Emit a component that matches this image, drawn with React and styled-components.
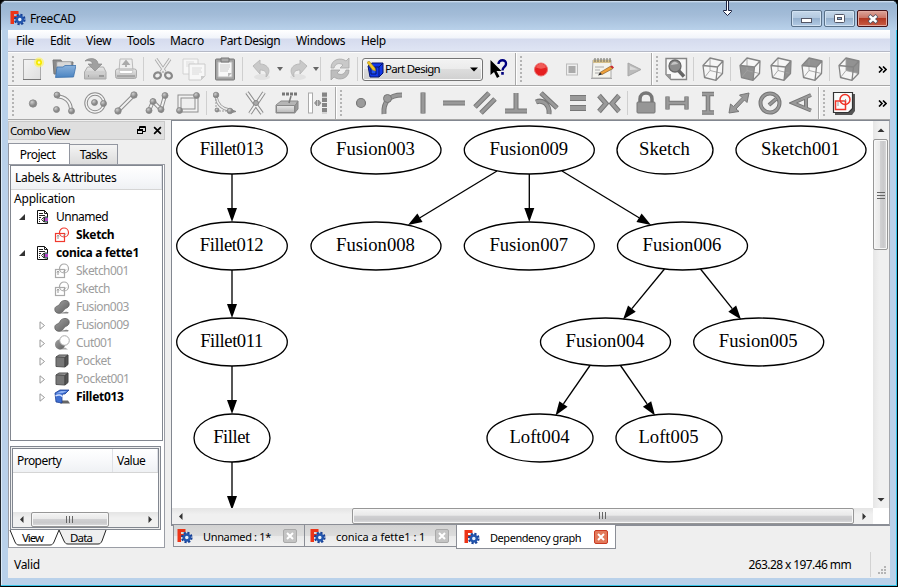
import React from "react";
import styled, { createGlobalStyle, css } from "styled-components";

const GlobalStyle = createGlobalStyle`
  * { box-sizing: border-box; }
  body { margin: 0; background: #000; font-family: "Noto Sans", "Open Sans", sans-serif; font-size: 12px; color: #000; overflow: hidden; }
  svg { display: block; flex: none; }
`;

const uiFont = css`font-family: "Noto Sans", "Open Sans", sans-serif;`;

const Window = styled.div`
  position: relative; width: 898px; height: 587px; display: flex; flex-direction: column;
  background: #b9d1ea; border: 1px solid #20262c; border-right-color: #000; border-bottom-color: #000;
  border-radius: 6px 6px 0 0; box-shadow: inset -1px -1px 0 #35c4e8, inset 1px 1px 0 #dcebf8;
  padding: 0 7px 8px 7px; overflow: hidden; ${uiFont}
`;
const TitleBar = styled.div`
  flex: none; height: 29px; margin: 0 -7px; padding: 0 9px 0 9px; display: flex; align-items: flex-start;
  background: linear-gradient(#d9e7f5 0, #98b4d1 2px, #a3bcd8 14px, #b9d1ea 29px);
  border-radius: 5px 5px 0 0;
`;
const TitleIcon = styled.div`padding-top: 9px; width: 20px;`;
const Text = styled.span`
  white-space: pre; letter-spacing: ${(p) => p.$ls || 0}px; font-weight: ${(p) => (p.$bold ? 700 : 400)};
  color: ${(p) => p.$color || "#000"}; line-height: 18px; font-size: ${(p) => p.$size || 12}px;
`;
const TitleText = styled(Text)`padding-top: 9px; flex: 1;`;
const CaptionButtons = styled.div`display: flex; gap: 2px; padding-top: 9px;`;
const CaptionButton = styled.div`
  width: 31px; height: 17px; border: 1px solid ${(p) => (p.$close ? "#451218" : "#5a7189")}; border-radius: 2px;
  display: flex; align-items: center; justify-content: center;
  box-shadow: inset 0 0 0 1px ${(p) => (p.$close ? "#e3aaa0" : "#d2e2f2")};
  background: ${(p) => (p.$close
    ? "linear-gradient(#dca59b 0, #cb7263 48%, #b23823 50%, #c95c44 100%)"
    : "linear-gradient(#c6d8ea 0, #b2c8df 48%, #96b1ce 50%, #b3cbe4 100%)")};
`;
const MenuBar = styled.div`
  flex: none; height: 22px; display: flex; align-items: center; padding: 1px 0 0 8px;
  background: linear-gradient(#fff 0, #f1f4fa 8px, #d5dbee 9px, #dfe5f4 21px); border-bottom: 1px solid #b5b9c6;
`;
const MenuItem = styled.div`width: ${(p) => p.$w}px;`;
const ToolRow = styled.div`
  flex: none; height: 34px; display: flex; background: #efefef; border-top: 1px solid #fdfdfd; border-bottom: 1px solid #a7a7a7;
`;
const ToolBar = styled.div`
  display: flex; align-items: center; height: 32px; width: ${(p) => p.$w}px;
  border-right: ${(p) => (p.$last ? 0 : 1)}px solid #a9a9a9; box-shadow: ${(p) => (p.$last ? "none" : "1px 0 0 #fff")};
`;
const Grip = styled.div`
  flex: none; width: 2px; height: 27px; margin: 0 ${(p) => p.$after}px 0 4px;
  background: repeating-linear-gradient(#b4b4b4 0 2px, transparent 2px 4px);
`;
const Slot = styled.div`flex: none; width: ${(p) => p.$w || 31}px; display: flex; justify-content: center; align-items: center;`;
const Separator = styled.div`flex: none; width: 1px; height: 24px; margin: 0 ${(p) => p.$r ?? 3}px 0 ${(p) => p.$l ?? 2}px; background: #cfcfcf;`;
const Overflow = styled.div`margin-left: auto; padding-right: 3px;`;
const Combo = styled.div`
  flex: none; width: 121px; height: 23px; border: 1px solid #747474; border-radius: 3px; display: flex; align-items: center;
  padding: 0 4px; box-shadow: inset 0 0 0 1px #fafafa;
  background: linear-gradient(#f3f3f3 0, #ebebeb 49%, #dddddd 50%, #d0d0d0 100%);
`;
const ComboText = styled(Text)`margin-left: 1px; flex: 1;`;
const Body = styled.div`flex: none; height: 430px; display: flex; background: #efefef;`;
const Dock = styled.div`width: 157px; padding-top: 1px; display: flex; flex-direction: column;`;
const DockTitle = styled.div`
  height: 19px; border: 1px solid #c9c9c9; background: #dfdfdf; display: flex; align-items: center; gap: 7px; padding: 0 2px 0 1px;
`;
const DockName = styled(Text)`flex: 1;`;
const DockTabs = styled.div`height: 24px; display: flex; align-items: flex-end; padding-top: 3px;`;
const DockTab = styled.div`
  width: ${(p) => p.$w}px; height: ${(p) => (p.$active ? 22 : 20)}px; display: flex; align-items: center; justify-content: center;
  border: 1px solid #9296a0; border-bottom: 0; border-left-width: ${(p) => (p.$active ? 1 : 0)}px; margin-bottom: ${(p) => (p.$active ? -1 : 0)}px;
  background: ${(p) => (p.$active ? "#fff" : "linear-gradient(#f4f4f4, #dcdcdc)")}; padding-right: ${(p) => (p.$active ? 3 : 0)}px;
`;
const DockPage = styled.div`
  width: 157px; height: 384px; background: #fff; border: 1px solid #9a9da5; padding: 0 0 0 1px; display: flex; flex-direction: column;
`;
const Tree = styled.div`width: 153px; height: 277px; border: 1px solid #828790; background: #fff;`;
const HeaderRow = styled.div`
  height: ${(p) => p.$h}px; display: flex; background: linear-gradient(#fff, #f8f9fb 50%, #eff1f4); border-bottom: 1px solid #d5d5d5;
`;
const HeaderCell = styled.div`
  width: ${(p) => p.$w}px; padding-left: 4px; display: flex; align-items: center; border-right: 1px solid #dfe1e6;
`;
const TreeRow = styled.div`height: 18px; display: flex; align-items: center; padding-left: ${(p) => p.$pad}px;`;
const Expander = styled.div`width: ${(p) => p.$w}px; display: flex; justify-content: flex-start;`;
const IconCell = styled.div`width: ${(p) => p.$w}px;`;
const PropertyFrame = styled.div`width: 151px; height: 84px; margin-top: 5px; border: 1px solid #828790; background: #efefef; padding: 1px;`;
const PropertyTable = styled.div`height: 80px; border: 1px solid #828790; background: #fff; display: flex; flex-direction: column; justify-content: space-between;`;
const SheetTabs = styled.div`
  width: 152px; height: 17px;
  svg { overflow: visible; }
`;
const HBar = styled.div`
  height: ${(p) => p.$h}px; width: ${(p) => p.$w}px; display: flex; align-items: center; background: linear-gradient(#e4e4e4, #f0f0f0 40%);
`;
const ArrowCell = styled.div`
  width: ${(p) => p.$w}px; height: ${(p) => p.$h || 16}px; flex: none; display: flex; align-items: center; justify-content: center;
  margin-top: ${(p) => (p.$end ? "auto" : 0)};
`;
const ThumbH = styled.div`
  width: ${(p) => p.$w}px; height: 100%; margin-left: ${(p) => p.$x}px; margin-right: auto; border: 1px solid #979797; border-radius: 2px;
  display: flex; align-items: center; justify-content: center; box-shadow: inset 0 0 0 1px #f7f7f7;
  background: linear-gradient(#f4f4f4 0, #e9e9e9 45%, #d0d0d2 50%, #c9c9cb 75%, #dddddf 100%);
`;
const VBar = styled.div`width: 16px; height: 387px; display: flex; flex-direction: column; background: linear-gradient(90deg, #e6e6e6, #f0f0f0 40%);`;
const ThumbV = styled.div`
  flex: none; width: 15px; height: 111px; border: 1px solid #979797; border-radius: 2px; display: flex; align-items: center; justify-content: center;
  box-shadow: inset 0 0 0 1px #f7f7f7; background: linear-gradient(90deg, #f4f4f4 0, #e9e9e9 45%, #d0d0d2 50%, #c9c9cb 75%, #dddddf 100%);
`;
const Mdi = styled.div`width: 719px; margin-left: 6px; display: flex; flex-direction: column;`;
const MdiView = styled.div`
  height: 406px; border: 1px solid #828790; border-bottom: 2px solid #8b8e96; border-right-color: #a4a7ad; background: #fff;
`;
const ViewRow = styled.div`height: 387px; display: flex;`;
const MdiTabs = styled.div`display: flex; align-items: flex-start; padding-left: 2px;`;
const MdiTab = styled.div`
  width: ${(p) => p.$w}px; height: ${(p) => (p.$active ? 24 : 22)}px; margin-top: -1px;
  display: flex; align-items: center; border: 1px solid #8b8e96; border-top: 0; padding: 1px 7px 0 ${(p) => p.$pl}px;
  margin-right: -1px; z-index: ${(p) => (p.$active ? 1 : 0)};
  background: ${(p) => (p.$active ? "#fff" : "linear-gradient(#d2d2d2 0, #dcdcdc 50%, #eaeaea 55%, #f1f1f1)")};
`;
const TabText = styled(Text)`margin-left: ${(p) => p.$x}px; padding-top: 1px; flex: 1;`;
const CloseBox = styled.div`
  width: 14px; height: 14px; border-radius: 2px; border: 1px solid ${(p) => (p.$active ? "#c93a22" : "#a9a9a9")};
  background: ${(p) => (p.$active ? "#e2795a" : "#c4c4c4")}; display: flex; align-items: center; justify-content: center;
`;
const StatusBar = styled.div`
  flex: none; height: 28px; background: #efefef; display: flex; align-items: center; padding: 2px 3px 0 6px;
`;
const StatusText = styled(Text)`flex: 1;`;
const StatusDivider = styled.div`width: 1px; height: 25px; margin: -2px 6px 0 19px; background: #d2d2d2;`;
const ResizeCursor = styled.div`position: absolute; left: 721px; top: -1px;`;
const Defs = styled.svg`position: absolute; width: 0; height: 0;`;

const Ic = ({ children, s = 24, w, h, vb = "0 0 24 24" }) => (
  <svg width={w || s} height={h || s} viewBox={vb} fill="none">{children}</svg>
);

const dot = (x, y, r = 3) => <circle key={`${x},${y}`} cx={x} cy={y} r={r} fill="url(#ball)" stroke="#858585" strokeWidth=".8" />;
const tube = (d) => (
  <>
    <path d={d} stroke="#8e8e8e" strokeWidth="4" />
    <path d={d} stroke="#f2f2f2" strokeWidth="2" />
  </>
);
const slab = (d, w = 4) => (
  <>
    <path d={d} stroke="#777" strokeWidth={w + 1} />
    <path d={d} stroke="#999" strokeWidth={w - 1} />
  </>
);
const cubeLines = (
  <>
    <path d="M9 1v12.500l12.500 3M9 13.500l-5.500 7" stroke="#a0a0a0" strokeWidth=".9" />
    <path d="M2 8.500L9 1l13 3-5.500 6zM2 8.500l1.500 12L15 23.300l1.500-13.300M15 23.300l6.500-6.800L22 4" stroke="#858585" strokeWidth="1.300" strokeLinejoin="round" />
  </>
);
const faces = {
  none: "",
  front: "M2 8.500l14.500 1.500L15 23.300 3.500 20.500z",
  right: "M16.500 10L22 4l-.5 12.500-6.500 6.800z",
  top: "M2 8.500L9 1l13 3-5.500 6z",
  back: "M9 1l13 3-.5 12.500L9 13.500z",
};
const Cube = ({ face }) => (
  <Ic><path d="M2 8.500L9 1l13 3-.5 12.500-6.500 6.800-11.500-2.800z" fill="#f6f6f6" /><path d={faces[face]} fill="#929292" />{cubeLines}</Ic>
);
const SketchArt = ({ c }) => (
  <>
    <rect x="1.500" y="6.500" width="9" height="8" stroke={c} strokeWidth="1.200" />
    <circle cx="10" cy="5.500" r="4.500" stroke={c} strokeWidth="1.200" />
    <path d="M4 12V8.500M3 9.500l1-1.500 1 1.500M9 9.500l3-3" stroke="#999" />
  </>
);

const icons = {
  newDoc: <Ic><rect x="2.500" y="2.500" width="17" height="20" fill="url(#paper)" stroke="#ababab" /><path d="M2 22.500h18" stroke="#777" /><circle cx="18" cy="5.500" r="5" fill="#fff35a" opacity=".65" /><circle cx="18" cy="5.500" r="3" fill="#f5e900" /><circle cx="18" cy="5.500" r="1.200" fill="#fffbc0" /></Ic>,
  open: <Ic><path d="M1 3h8l1 2h11l-1 12H2z" fill="#8b8b8b" stroke="#777" /><path d="M5 5h14v7H5z" fill="#f5f5f5" stroke="#aaa" /><path d="M6 7h12M6 9h12" stroke="#bbb" /><path d="M5 10h6l2-1.500h11L21.500 20l-18 .5z" fill="url(#blue)" stroke="#3d72ac" strokeWidth=".8" /></Ic>,
  save: <Ic><path d="M1.500 15l3-5h16l2.500 5v7h-21.500z" fill="url(#metal)" stroke="#aaa" /><path d="M2 15h20.500" stroke="#c9c9c9" /><path d="M16 19h5M5 19h1" stroke="#999" strokeWidth="2" /><path d="M2 4C6 0 15 1 15 7h4l-7 7-7-7h4.500C9.500 4 6 3 2 4z" fill="#a0a0a0" stroke="#8b8b8b" strokeWidth=".7" /></Ic>,
  print: <Ic><path d="M6 2h12l1 12H5z" fill="#eee" stroke="#bbb" /><path d="M12 10V7H9.500L12 4l2.500 3H12" fill="#aaa" stroke="#aaa" strokeWidth="1.800" /><rect x="1.500" y="12" width="21" height="9.500" rx="2" fill="url(#metal)" stroke="#acacac" /><path d="M5 13.500h14l-1 3H6z" fill="#fff" stroke="#bbb" strokeWidth=".7" /><path d="M3 19h18" stroke="#888" /></Ic>,
  cut: <Ic><path d="M5 2l9 13M19 2l-9 13" stroke="#aaa" strokeWidth="3.200" /><path d="M5 2l9 13M19 2l-9 13" stroke="#ededed" strokeWidth="1.500" /><ellipse cx="6.500" cy="18.500" rx="3.500" ry="3" stroke="#898989" strokeWidth="2.200" transform="rotate(-25 6.500 18.500)" /><ellipse cx="17.500" cy="18.500" rx="3.500" ry="3" stroke="#898989" strokeWidth="2.200" transform="rotate(25 17.500 18.500)" /></Ic>,
  copy: <Ic><path d="M1 2h15v15H1z" fill="#f7f7f7" stroke="#d2d2d2" /><path d="M4 5h8M4 7h9M4 9h4" stroke="#ddd" /><path d="M7 7h16v12l-4 4H7z" fill="#f7f7f7" stroke="#cbcbcb" /><path d="M10 11h10M10 13h9M10 15h10M10 17h7" stroke="#dadada" /><path d="M19 23v-4h4z" fill="#ccc" /></Ic>,
  paste: <Ic><rect x="2.500" y="2" width="19" height="21" rx="1" fill="#a1a1a1" stroke="#777" /><path d="M5 5h14v15H5z" fill="#f8f8f8" stroke="#bbb" /><path d="M7 8h10M7 10h10M7 12h9M7 14h8" stroke="#ccc" /><path d="M8 1h8v4H8z" fill="#aaa" stroke="#777" /><path d="M15 20v-4h4z" fill="#bbb" /></Ic>,
  undo: <Ic><ellipse cx="12" cy="20" rx="8" ry="3" fill="#e2e2e2" /><path d="M3 9l7-6v4c8 0 12 7 6 13 1-5-1-7-6-7v4z" fill="#c9c9c9" stroke="#b9b9b9" /></Ic>,
  redo: <Ic><ellipse cx="12" cy="20" rx="8" ry="3" fill="#e2e2e2" /><path d="M21 9l-7-6v4c-8 0-12 7-6 13-1-5 1-7 6-7v4z" fill="#c9c9c9" stroke="#b9b9b9" /></Ic>,
  refresh: <Ic><path d="M3 11C3 2 13 0 18 4l3-3v10h-9l3-3c-4-3-8-1-9 3z" fill="#c9c9c9" stroke="#a9a9a9" strokeWidth=".8" /><path d="M21 13c0 9-10 11-15 7l-3 3V13h9l-3 3c4 3 8 1 9-3z" fill="#bdbdbd" stroke="#a3a3a3" strokeWidth=".8" /></Ic>,
  help: <Ic><path d="M4.500 3v15l3.500-3 3 6 2.500-1.500-3-5.500h5z" fill="#000" /><path d="M12.500 7c0-5 8-5 7.500 0 0 3-3.500 3-3.500 6.500" stroke="#00007e" strokeWidth="2.400" /><path d="M15.200 15h2.600v2.800h-2.600z" fill="#00007e" /></Ic>,
  record: <Ic><circle cx="12" cy="12.500" r="6.500" fill="#e51f20" stroke="#ec7070" /><path d="M7 10.500c1-5 9-5 10 0-3 1.500-7 1.500-10 0z" fill="#f46a65" opacity=".8" /></Ic>,
  stop: <Ic><rect x="6.500" y="7" width="11" height="11" fill="#eee" stroke="#bcbcbc" /><rect x="8.500" y="9" width="7" height="7" fill="#aaa" /></Ic>,
  macro: <Ic><path d="M2 3h18v18H1z" fill="#f3f3ed" stroke="#aaa" /><path d="M2 3h18v3H2z" fill="#d6c08c" /><path d="M4 1v4M7 1v4M10 1v4M13 1v4M16 1v4M19 1v4" stroke="#6d6d60" /><path d="M4 10h9M4 13h5M4 16h9M0 21.500h21" stroke="#aaa" /><path d="M9 15.500l10-6 3 2-11 6z" fill="#f0a13a" stroke="#8a622d" strokeWidth=".7" /><path d="M19 9.500l2-1 2 2-1 1z" fill="#cc2630" /><path d="M9 15.500l2 2-4 1z" fill="#222" /></Ic>,
  play: <Ic><path d="M6 6v13l13-6.500z" fill="#bbb" stroke="#a8a8a8" /><path d="M8 9v4l8-.5z" fill="#dadada" /></Ic>,
  fit: <Ic><path d="M2 1.500h20.500v21H7l-5-5z" fill="#f8f8f8" stroke="#868686" strokeWidth="1.400" /><path d="M2 17l5 5v-5z" fill="#999" /><circle cx="11" cy="9" r="6" fill="#8c8c8c" stroke="#666" strokeWidth="1.300" /><path d="M7 8c2-5 6-3 7-1z" fill="#c5c5c5" /><path d="M14.500 13.500l5.500 6" stroke="#666" strokeWidth="3.500" /></Ic>,
  point: <Ic>{dot(12, 12.500, 3.700)}</Ic>,
  arc: <Ic>{tube("M5 5.500c8 0 14 5 14 14")}{[dot(5, 4), dot(19.500, 20), dot(4.500, 18.500)]}</Ic>,
  circle: <Ic><circle cx="12" cy="12" r="9" stroke="#8e8e8e" strokeWidth="3.500" /><circle cx="12" cy="12" r="9" stroke="#f2f2f2" strokeWidth="1.500" />{[dot(11.500, 11.500), dot(20.500, 12.500)]}</Ic>,
  line: <Ic>{tube("M4 20L20 4")}{[dot(4, 20, 3.200), dot(20, 4, 3.200)]}</Ic>,
  poly: <Ic>{tube("M4 19.500l4-9 8 8 4-14")}{[dot(4, 19.500), dot(8, 10.500), dot(16, 18.500), dot(20, 4.500)]}</Ic>,
  rect: <Ic>{tube("M3.500 5.500h17v14h-17z")}{[dot(3.500, 19.500), dot(20.500, 4.500)]}</Ic>,
  fillet: <Ic><path d="M3 5c1 8 6 13 14 14" stroke="#9b9b9b" strokeWidth="3" /><path d="M3 5c1 8 6 13 14 14" stroke="#eee" strokeWidth="1.500" /><path d="M3 5v15h15" stroke="#999" strokeDasharray="2 1" />{[dot(3, 4, 2.800), dot(17, 20, 2.800), dot(4, 19, 2)]}<path d="M19 19l4 1.500-4 1z" stroke="#888" fill="#888" /></Ic>,
  trim: <Ic>{tube("M3 1.500l15 21M20 1.500L6 22.500")}<circle cx="12" cy="12" r="2.500" fill="#aaa" stroke="#888" /></Ic>,
  external: <Ic><path d="M1 14l5-4h17l-3 5v7H1z" fill="#b5b5b5" stroke="#8d8d8d" /><path d="M1.500 14.500h18v7h-18z" fill="url(#metal)" stroke="#888" /><path d="M20 14.500l3-4v7.500l-3 3.500z" fill="#9a9a9a" stroke="#888" /><path d="M7 3h15" stroke="#777" strokeWidth="3" strokeDasharray="3 1" /><path d="M16 5l-2 7" stroke="#777" strokeWidth="1.500" /></Ic>,
  carbon: <Ic><rect x="2.500" y="2" width="4" height="20" fill="#fff" stroke="#aaa" /><path d="M11 9l-2.500 3 2.500 3zM12.500 9l2.500 3-2.500 3z" fill="#999" stroke="#888" strokeWidth=".8" /><path d="M18.500 1.500v21" stroke="#858585" strokeWidth="5" strokeDasharray="4.200 1" /></Ic>,
  cPoint: <Ic><circle cx="12" cy="12" r="4.500" fill="#9b9b9b" stroke="#777" strokeWidth="1.200" /></Ic>,
  cTangent: <Ic>{slab("M4 23C3 11 9 4 22 4")}<circle cx="7.500" cy="7.500" r="4" fill="#9b9b9b" stroke="#777" /></Ic>,
  cVert: <Ic>{slab("M12 1.500v21")}</Ic>,
  cHor: <Ic>{slab("M1 12h22")}</Ic>,
  cPar: <Ic>{slab("M2 16L16 2M8 22L22 8")}</Ic>,
  cPerp: <Ic>{slab("M12 2v17M1 20h22")}</Ic>,
  cTan2: <Ic>{slab("M6 2l16 15M1 11c7-3 14 3 13 12")}</Ic>,
  cEq: <Ic>{slab("M4 7h16M4 17h16", 5)}</Ic>,
  cSym: <Ic>{slab("M2 4.500l7 8-7 8M22 4.500l-7 8 7 8")}</Ic>,
  lock: <Ic><path d="M6 12V8c0-8 12-8 12 0v4" stroke="#777" strokeWidth="3.500" /><rect x="3" y="11" width="18" height="11" rx="1" fill="#969696" stroke="#777" /></Ic>,
  hDist: <Ic>{slab("M2.500 5.500v13M21.500 5.500v13M2 12h20", 3.4)}</Ic>,
  vDist: <Ic>{slab("M6 3h12M6 21.500h12M12 3v18", 3.6)}</Ic>,
  dist: <Ic><path d="M2 22l1.500-9 3 2.500L15 6.500 12.500 4 22 2l-2 9.500-2.500-2.500-8.500 9 3 2.500z" fill="#999" stroke="#777" /></Ic>,
  radius: <Ic><circle cx="12" cy="12" r="9.500" stroke="#777" strokeWidth="4" /><circle cx="12" cy="12" r="9.500" stroke="#999" strokeWidth="2" />{slab("M11 14l7-6", 3)}</Ic>,
  angle: <Ic>{slab("M22 4L4 12l18 7.500M17 6.500v11", 3)}</Ic>,
  sketch: <Ic><path d="M3 3h20v17l-3 4H3z" fill="#555" /><path d="M1.500 1.500h19v16l-4 4h-15z" fill="#fbfbfb" stroke="#333" strokeWidth="1.200" /><rect x="3.500" y="10" width="10" height="8.500" stroke="#ef3327" strokeWidth="1.500" /><circle cx="13" cy="8.500" r="5" stroke="#ef3327" strokeWidth="1.500" /><path d="M6 15v-4M11 11l3-3" stroke="#999" /></Ic>,
};

const Logo = ({ s = 16 }) => (
  <Ic s={s} vb="0 0 16 16">
    <path d="M.5 1h8v3H4v2h4v3H4v5H.5z" fill="#ec3417" />
    <circle cx="9.800" cy="9.500" r="4.600" stroke="#173f95" strokeWidth="2.400" strokeDasharray="2.100 1.510" />
    <circle cx="9.800" cy="9.500" r="3" fill="#e9f0fa" stroke="#2356ad" strokeWidth="2.500" />
  </Ic>
);
const Tri = ({ dir, c = "#333" }) => {
  const d = { l: "M5.500 1L2 4.500 5.500 8z", r: "M2.500 1L6 4.500 2.500 8z", u: "M.5 6L4 2.500 7.500 6z", d: "M.5 3L4 6.500 7.500 3z" }[dir];
  return <Ic w={8} h={9} vb="0 0 8 9"><path d={d} fill={c} /></Ic>;
};
const DropArrow = () => <Ic w={6} h={4} vb="0 0 6 4"><path d="M0 0h6L3 4z" fill="#666" /></Ic>;
const GripLines = ({ v }) => (
  <Ic w={8} h={8} vb="0 0 8 8"><path d={v ? "M0 1.500h8M0 4.500h8M0 7.500h8" : "M.5 0v7M3.500 0v7M6.500 0v7"} stroke="#666" /></Ic>
);
const Chevrons = () => <Ic w={9} h={7} vb="0 0 9 7"><path d="M1 .5l3 3-3 3M5 .5l3 3-3 3" stroke="#000" strokeWidth="1.600" /></Ic>;
const Cross = ({ s = 8, c = "#fff", w = 2 }) => <Ic s={s} vb="0 0 8 8"><path d="M1 1l6 6M7 1L1 7" stroke={c} strokeWidth={w} /></Ic>;

const treeIcons = {
  doc: <Ic s={16} vb="0 0 16 16"><path d="M2.500 1.500h7l3 3v10h-10z" fill="#fff" stroke="#111" /><path d="M9.500 1.500v3h3M4 4.500h4M4 6.500h6M4 8.500h2M4 10.500h1M4 12.500h1" stroke="#222" /><path d="M12.500 8H9.500v5h3" fill="#70c9cf" stroke="#333" /><path d="M10 9h3v3h-3z" fill="#b645c9" /><path d="M6.500 10.500L9 8v5z" fill="#fff" stroke="#333" /></Ic>,
  sketchRed: <Ic s={16} vb="0 0 16 16"><SketchArt c="#f0392e" /></Ic>,
  sketch: <Ic s={16} vb="0 0 16 16"><SketchArt c="#aaa" /></Ic>,
  fusion: <Ic s={16} vb="0 0 16 16"><path d="M3 14.500h11c2-1-1-2-3-1.500z" fill="#888" /><path d="M.8 10.500c0-4 3-2.500 5-5.500C7 .5 15.200 0 15.200 5c0 4.500-4 3.500-5.500 6.500-2.500 4-8.900 3.500-8.900-1z" fill="url(#dark)" stroke="#606060" strokeWidth=".8" /></Ic>,
  cut: <Ic s={16} vb="0 0 16 16"><path d="M4 14.500h10l-3-2z" fill="#aaa" /><circle cx="6" cy="9.500" r="5" fill="url(#dark)" /><circle cx="10.500" cy="5.500" r="4.800" fill="#fff" stroke="#aaa" /></Ic>,
  box: <Ic s={16} vb="0 0 16 16"><path d="M2 4l3-2h9l-3 2.500z" fill="#999" stroke="#555" /><path d="M2 4l9 .5V14l-9-.5z" fill="#777" stroke="#555" /><path d="M11 4.500L14 2v9.500L11 14z" fill="#555" stroke="#444" /></Ic>,
  fillet: <Ic s={16} vb="0 0 16 16"><path d="M6 14.500h10l-2-3H7z" fill="#666" /><path d="M1 4l5-3h9l-4 4H9c-1 1-1 2-1 9l-6-1z" fill="#3f6fd2" stroke="#1c3f93" strokeWidth=".8" /><path d="M2 4.500l5-2.500h6L9 4z" fill="#8eb1f1" /><path d="M1.500 7c3-2 6-1 7 1" stroke="#d3e1ff" strokeWidth="1.500" /></Ic>,
};

const rows = [
  ["sketch", "Sketch001"], ["sketch", "Sketch"], ["fusion", "Fusion003"], ["fusion", "Fusion009", 1],
  ["cut", "Cut001", 1], ["box", "Pocket", 1], ["box", "Pocket001", 1], ["fillet", "Fillet013", 1, true],
];
const OpenTri = () => <Ic w={7} h={7} vb="0 0 7 7"><path d="M6 0v6H0z" fill="#333" /></Ic>;
const ClosedTri = () => <Ic w={7} h={9} vb="0 0 7 9"><path d="M1 .8l4.500 3.700L1 8.200z" fill="#fff" stroke="#999" /></Ic>;

const nodes = [
  [232, 150, 55.3, "Fillet013"], [376, 150, 65, "Fusion003"], [529.3, 150, 65, "Fusion009"], [665, 150, 48, "Sketch"], [801, 150, 65, "Sketch001"],
  [232, 246, 55.3, "Fillet012"], [376, 246, 65, "Fusion008"], [529.3, 246, 65, "Fusion007"], [682.5, 246, 65, "Fusion006"],
  [232, 342, 55.3, "Fillet011"], [605.5, 342, 65, "Fusion004"], [758.7, 342, 65, "Fusion005"],
  [232, 438, 38, "Fillet"], [540, 438, 53, "Loft004"], [669, 438, 53, "Loft005"],
];
const edges = [
  [232, 174, 232, 222], [232, 270, 232, 318], [232, 366, 232, 414], [232, 462, 232, 510],
  [497, 171, 408, 225], [529.3, 174, 529.3, 222], [562, 171, 651, 225],
  [664.5, 269, 623, 319.5], [700.5, 269, 741, 319.5], [590, 365.5, 555.5, 415.5], [620.5, 365.5, 655, 415.5],
];
const Edge = ({ e: [x1, y1, x2, y2] }) => {
  const len = Math.hypot(x2 - x1, y2 - y1);
  const ux = (x2 - x1) / len, uy = (y2 - y1) / len;
  const bx = x2 - ux * 14, by = y2 - uy * 14;
  return (
    <>
      <path d={`M${x1} ${y1}L${bx} ${by}`} stroke="#000" strokeWidth="1.330" />
      <path d={`M${x2} ${y2}L${bx - uy * 5} ${by + ux * 5}L${bx + uy * 5} ${by - ux * 5}z`} fill="#000" />
    </>
  );
};
const Graph = () => (
  <svg width="701" height="387" viewBox="172 121 701 387">
    {nodes.map(([x, y, r, t]) => (
      <g key={t}>
        <ellipse cx={x} cy={y} rx={r} ry="24" fill="none" stroke="#000" strokeWidth="1.330" />
        <text x={x - 0.5} y={y + 5} textAnchor="middle" letterSpacing={t.startsWith("Fillet") ? -0.45 : 0} fontFamily='"Liberation Serif", serif' fontSize="18.670">{t}</text>
      </g>
    ))}
    {edges.map((e) => <Edge key={e.join()} e={e} />)}
  </svg>
);

const Tools = ({ names }) => names.map((n, i) => (n === "|" ? <Separator key={i} /> : <Slot key={i}>{n.startsWith("cube-") ? <Cube face={n.slice(5)} /> : icons[n]}</Slot>));

const menu = [["File", 34, -0.3], ["Edit", 36, -0.3], ["View", 41, -0.3], ["Tools", 43, -0.3], ["Macro", 50, -0.3], ["Part Design", 76, -0.5], ["Windows", 65, -0.3], ["Help", 40, -0.3]];

export default function App() {
  return (
    <>
      <GlobalStyle />
      <Window>
        <Defs>
          <defs>
            <radialGradient id="ball" cx=".35" cy=".3"><stop offset="0" stopColor="#d0d0d0" /><stop offset="1" stopColor="#888" /></radialGradient>
            <linearGradient id="dark" x2="1" y2="1"><stop stopColor="#a0a0a0" /><stop offset="1" stopColor="#5f5f5f" /></linearGradient>
            <linearGradient id="paper" x2="1" y2="1"><stop stopColor="#f4f4f4" /><stop offset="1" stopColor="#dedede" /></linearGradient>
            <linearGradient id="metal" x2="0" y2="1"><stop stopColor="#e8e8e8" /><stop offset="1" stopColor="#b9b9b9" /></linearGradient>
            <linearGradient id="blue" x2="0" y2="1"><stop stopColor="#8ab2dc" /><stop offset="1" stopColor="#4b84c2" /></linearGradient>
          </defs>
        </Defs>
        <TitleBar>
          <TitleIcon><Logo /></TitleIcon>
          <TitleText $ls={-0.4}>FreeCAD</TitleText>
          <CaptionButtons>
            <CaptionButton><Ic w={11} h={9} vb="0 0 11 9"><rect x=".5" y="4.500" width="10" height="4" fill="#fff" stroke="#535666" /></Ic></CaptionButton>
            <CaptionButton><Ic w={11} h={9} vb="0 0 11 9"><rect x=".5" y=".5" width="10" height="8" rx="1" fill="#fff" stroke="#535666" /><rect x="3.500" y="3.500" width="4" height="2" fill="#8db1d4" stroke="#535666" /></Ic></CaptionButton>
            <CaptionButton $close><Ic w={12} h={10} vb="0 0 12 10"><path d="M2 1.500l8 7M10 1.500l-8 7" stroke="#535666" strokeWidth="4" /><path d="M2.500 2l7 6M9.500 2l-7 6" stroke="#fff" strokeWidth="2.400" /></Ic></CaptionButton>
          </CaptionButtons>
        </TitleBar>
        <MenuBar>
          {menu.map(([t, w, ls]) => <MenuItem key={t} $w={w}><Text $ls={ls}>{t}</Text></MenuItem>)}
        </MenuBar>
        <ToolRow>
          <ToolBar $w={508}>
            <Grip $after={3} />
            <Tools names={["newDoc", "open", "save", "print", "|", "cut", "copy", "paste", "|", "undo"]} />
            <Slot $w={6}><DropArrow /></Slot>
            <Slot $w={30}>{icons.redo}</Slot>
            <Slot $w={6}><DropArrow /></Slot>
            <Separator $l={1} $r={3} />
            <Slot $w={31}>{icons.refresh}</Slot>
            <Separator $l={2} $r={4} />
            <Combo>
              <Ic s={17} vb="0 0 17 17"><path d="M1 5l4-3h11v10l-4 4H3z" fill="#1238e8" stroke="#06146b" /><path d="M12 6l4-4M12 6v10M2 6h10" stroke="#06146b" /><path d="M4 7h5v6H4z" fill="#2353ef" stroke="#06146b" /><path d="M0 1.500l2-1.500 6 7 .5 3-3-1z" fill="#f2c622" stroke="#9e8424" strokeWidth=".6" /></Ic>
              <ComboText $size={11.5} $ls={-0.72}>Part Design</ComboText>
              <Ic w={8} h={5} vb="0 0 8 5"><path d="M0 .5h8L4 4.500z" fill="#000" /></Ic>
            </Combo>
            <Slot $w={29}>{icons.help}</Slot>
          </ToolBar>
          <ToolBar $w={136}>
            <Grip $after={3.5} />
            <Tools names={["record", "stop", "macro", "play"]} />
          </ToolBar>
          <ToolBar $w={238} $last>
            <Grip $after={2} />
            <Tools names={["fit", "|", "cube-none", "|", "cube-front", "cube-right", "cube-top", "|", "cube-back"]} />
            <Overflow><Chevrons /></Overflow>
          </ToolBar>
        </ToolRow>
        <ToolRow>
          <ToolBar $w={328}>
            <Grip $after={3.5} />
            <Tools names={["point", "arc", "circle", "line", "poly", "rect", "|", "fillet", "trim", "external", "carbon"]} />
          </ToolBar>
          <ToolBar $w={483}>
            <Grip $after={3.5} />
            <Tools names={["cPoint", "cTangent", "cVert", "cHor", "cPar", "cPerp", "cTan2", "cEq", "cSym", "|", "lock", "hDist", "vDist", "dist", "radius", "angle"]} />
          </ToolBar>
          <ToolBar $w={71} $last>
            <Grip $after={3.5} />
            <Tools names={["sketch"]} />
            <Overflow><Chevrons /></Overflow>
          </ToolBar>
        </ToolRow>
        <Body>
          <Dock>
            <DockTitle>
              <DockName $size={11.5} $ls={-0.75}>Combo View</DockName>
              <Ic w={9} h={9} vb="0 0 9 9"><path d="M2.500 3V.5h6v5H6M2.500 1.500h6" stroke="#000" /><rect x=".5" y="3.500" width="5" height="4" stroke="#000" /><path d="M0 4.500h6" stroke="#000" /></Ic>
              <Cross s={9} c="#000" w={1.5} />
            </DockTitle>
            <DockTabs>
              <DockTab $w={62} $active><Text $ls={-0.55}>Project</Text></DockTab>
              <DockTab $w={48}><Text $ls={-0.6}>Tasks</Text></DockTab>
            </DockTabs>
            <DockPage>
              <Tree>
                <HeaderRow $h={24}><HeaderCell $w={151}><Text $ls={-0.3}>Labels & Attributes</Text></HeaderCell></HeaderRow>
                <TreeRow $pad={3}><Text $ls={-0.2}>Application</Text></TreeRow>
                <TreeRow $pad={8}><Expander $w={16}><OpenTri /></Expander><IconCell $w={21}>{treeIcons.doc}</IconCell><Text $ls={-0.5}>Unnamed</Text></TreeRow>
                <TreeRow $pad={43}><IconCell $w={22}>{treeIcons.sketchRed}</IconCell><Text $bold $ls={-0.35}>Sketch</Text></TreeRow>
                <TreeRow $pad={8}><Expander $w={16}><OpenTri /></Expander><IconCell $w={21}>{treeIcons.doc}</IconCell><Text $bold $ls={-0.35}>conica a fette1</Text></TreeRow>
                {rows.map(([ic, t, open, bold]) => (
                  <TreeRow key={t} $pad={28}>
                    <Expander $w={15}>{open && <ClosedTri />}</Expander>
                    <IconCell $w={22}>{treeIcons[ic]}</IconCell>
                    <Text $bold={bold} $ls={bold ? -0.3 : -0.55} $color={bold ? "#000" : "#9d9d9d"}>{t}</Text>
                  </TreeRow>
                ))}
              </Tree>
              <PropertyFrame>
                <PropertyTable>
                  <HeaderRow $h={24}>
                    <HeaderCell $w={100}><Text $ls={-0.55}>Property</Text></HeaderCell>
                    <HeaderCell $w={45}><Text $ls={-0.55}>Value</Text></HeaderCell>
                  </HeaderRow>
                  <HBar $w={145} $h={15}>
                    <ArrowCell $w={18}><Tri dir="l" /></ArrowCell>
                    <ThumbH $w={78} $x={0}><GripLines /></ThumbH>
                    <ArrowCell $w={17}><Tri dir="r" /></ArrowCell>
                  </HBar>
                </PropertyTable>
              </PropertyFrame>
              <SheetTabs>
                <svg width="152" height="17" viewBox="0 0 152 17" fontFamily='"Noto Sans", sans-serif' fontSize="11.500">
                  <path d="M49 0l5 11c1 2 2 3 4 3h30c2 0 3-1 4-3l4-11" fill="#efefef" stroke="#222" />
                  <path d="M0 0l5 12c1 2 2 3 4 3h31c2 0 3-1 4-3l5-12" fill="#fff" stroke="#222" />
                  <text x="12" y="12" textLength="22">View</text>
                  <text x="60" y="11.500" textLength="23">Data</text>
                </svg>
              </SheetTabs>
            </DockPage>
          </Dock>
          <Mdi>
            <MdiView>
              <ViewRow>
                <Graph />
                <VBar>
                  <ArrowCell $w={16} $h={18}><Tri dir="u" /></ArrowCell>
                  <ThumbV><GripLines v /></ThumbV>
                  <ArrowCell $w={16} $h={18} $end><Tri dir="d" /></ArrowCell>
                </VBar>
              </ViewRow>
              <HBar $w={701} $h={16}>
                <ArrowCell $w={17}><Tri dir="l" /></ArrowCell>
                <ThumbH $w={502} $x={163}><GripLines /></ThumbH>
                <ArrowCell $w={19}><Tri dir="r" /></ArrowCell>
              </HBar>
            </MdiView>
            <MdiTabs>
              <MdiTab $w={132} $pl={3}><Logo /><TabText $x={10} $size={11} $ls={-0.35}>Unnamed : 1*</TabText><CloseBox><Cross /></CloseBox></MdiTab>
              <MdiTab $w={153} $pl={5}><Logo /><TabText $x={10} $size={11} $ls={-0.05}>conica a fette1 : 1</TabText><CloseBox><Cross /></CloseBox></MdiTab>
              <MdiTab $w={160} $pl={7} $active><Logo /><TabText $x={10} $size={11} $ls={-0.45}>Dependency graph</TabText><CloseBox $active><Cross /></CloseBox></MdiTab>
            </MdiTabs>
          </Mdi>
        </Body>
        <StatusBar>
          <StatusText $ls={-0.3}>Valid</StatusText>
          <Text $ls={-0.6}>263.28 x 197.46 mm</Text>
          <StatusDivider />
          <Ic w={10} h={20} vb="0 0 10 20"><path d="M7 12h2M4 15h2M7 15h2M1 18h2M4 18h2M7 18h2" stroke="#b5b5b5" strokeWidth="2" /></Ic>
        </StatusBar>
        <ResizeCursor><Ic w={11} h={17} vb="0 0 11 17"><path d="M4.500-1v11.500h-3v1l4 4 4-4v-1h-3V-1z" fill="#fff" stroke="#1b2140" /></Ic></ResizeCursor>
      </Window>
    </>
  );
}
